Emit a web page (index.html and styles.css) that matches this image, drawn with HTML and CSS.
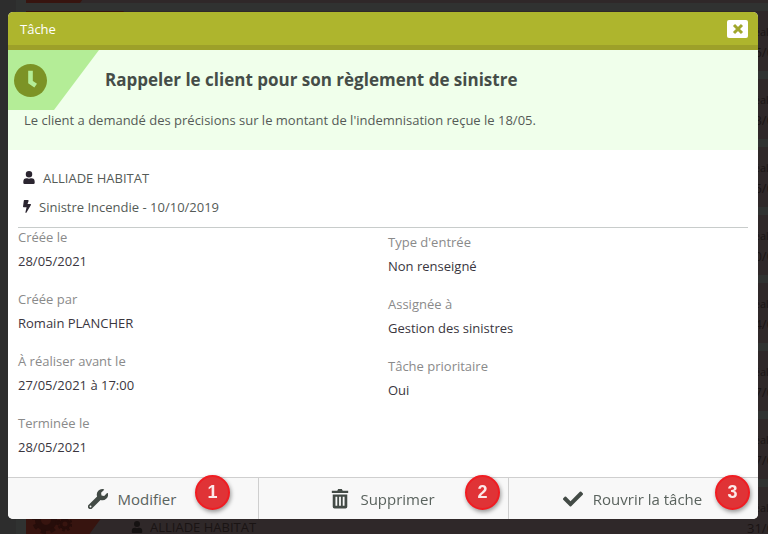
FILE: index.html
```
<!DOCTYPE html>
<html lang="fr">
<head>
    <meta charset="UTF-8">
    <meta name="viewport" content="width=device-width, initial-scale=1.0">
    <title>Tâche</title>
    <link rel="stylesheet" href="styles.css">
</head>
<body>

    <!-- Task list, dimmed behind the dialog -->
    <div class="backdrop" aria-hidden="true">
        <div class="row"><span class="row-tab"></span></div>
        <div class="row"><span class="row-tab"></span><p class="row-date">Réali<span>15/0</span></p></div>
        <div class="row"><span class="row-tab"></span><p class="row-date">Réali<span>13/0</span></p></div>
        <div class="row"><span class="row-tab"></span><p class="row-date">Réali<span>15/0</span></p></div>
        <div class="row"><span class="row-tab"></span><p class="row-date">Réali<span>10/0</span></p></div>
        <div class="row"><span class="row-tab"></span><p class="row-date">Réali<span>14/0</span></p></div>
        <div class="row"><span class="row-tab"></span><p class="row-date">Réali<span>17/0</span></p></div>
        <div class="row"><span class="row-tab"></span><p class="row-date">Réali<span>17/0</span></p></div>
        <div class="row">
            <span class="row-tab">
                <svg class="gears" viewBox="0 0 40 30">
                    <circle cx="14" cy="13" r="8" stroke-width="6" />
                    <circle cx="14" cy="13" r="12" stroke-width="4" stroke-dasharray="5 4.4" />
                    <circle cx="33" cy="17" r="4" stroke-width="3" />
                    <circle cx="33" cy="17" r="6" stroke-width="3" stroke-dasharray="2.4 2.3" />
                </svg>
            </span>
            <p class="row-name">
                <svg class="icon-small" viewBox="0 0 448 512"><path d="M224 256a128 128 0 1 0 0-256 128 128 0 0 0 0 256zm90 32h-17a174 174 0 0 1-146 0h-17A134 134 0 0 0 0 422v42a48 48 0 0 0 48 48h352a48 48 0 0 0 48-48v-42a134 134 0 0 0-134-134z" /></svg>
                ALLIADE HABITAT
            </p>
            <p class="row-date">Réali<span>31/0</span></p>
        </div>
    </div>

    <!-- Task dialog -->
    <main class="dialog" role="dialog" aria-labelledby="dialogTitle">
        <header class="dialog-header">
            <span id="dialogTitle">Tâche</span>
            <button class="close" type="button" aria-label="Fermer">
                <svg viewBox="0 0 12 12"><path d="M2 2l8 8M10 2l-8 8" /></svg>
            </button>
        </header>

        <section class="summary">
            <div class="summary-top">
                <div class="summary-tab">
                    <svg viewBox="0 0 32 32">
                        <circle cx="16" cy="16" r="16" fill="#7c9326" />
                        <path d="M16 6.5v11l5 3.5" fill="none" stroke="#b4ed97" stroke-width="4.5" />
                    </svg>
                </div>
                <h1>Rappeler le client pour son règlement de sinistre</h1>
            </div>
            <p>Le client a demandé des précisions sur le montant de l'indemnisation reçue le 18/05.</p>
        </section>

        <section class="content">
            <ul class="links">
                <li>
                    <svg class="icon-user" viewBox="0 0 448 512"><path d="M224 256a128 128 0 1 0 0-256 128 128 0 0 0 0 256zm90 32h-17a174 174 0 0 1-146 0h-17A134 134 0 0 0 0 422v42a48 48 0 0 0 48 48h352a48 48 0 0 0 48-48v-42a134 134 0 0 0-134-134z" /></svg>
                    ALLIADE HABITAT
                </li>
                <li>
                    <svg class="icon-bolt" viewBox="0 0 320 512"><path d="M296 160H181l42-129C227 15 215 0 200 0H56C44 0 34 9 32 21L0 261c-2 14 9 27 24 27h119L97 483c-4 15 8 29 23 29 8 0 16-4 21-12l176-304c9-16-2-36-21-36z" /></svg>
                    Sinistre Incendie - 10/10/2019
                </li>
            </ul>

            <div class="details">
                <dl>
                    <div><dt>Créée le</dt><dd>28/05/2021</dd></div>
                    <div><dt>Créée par</dt><dd>Romain PLANCHER</dd></div>
                    <div><dt>À réaliser avant le</dt><dd>27/05/2021 à 17:00</dd></div>
                    <div><dt>Terminée le</dt><dd>28/05/2021</dd></div>
                </dl>
                <dl class="right">
                    <div><dt>Type d'entrée</dt><dd>Non renseigné</dd></div>
                    <div><dt>Assignée à</dt><dd>Gestion des sinistres</dd></div>
                    <div><dt>Tâche prioritaire</dt><dd>Oui</dd></div>
                </dl>
            </div>
        </section>

        <footer class="actions">
            <div class="action">
                <button type="button">
                    <svg viewBox="0 0 512 512"><path d="M508 109c-2-9-13-12-20-5l-74 74-68-11-11-68 74-74c7-7 4-18-5-20A144 144 0 0 0 233 191L19 405a63 63 0 1 0 89 89l213-213A144 144 0 0 0 508 109zM64 472a24 24 0 1 1 0-48 24 24 0 0 1 0 48z" /></svg>
                    Modifier
                </button>
                <span class="badge badge-inner">1</span>
            </div>
            <div class="action">
                <button type="button">
                    <svg viewBox="0 0 20 22"><path fill-rule="evenodd" d="M1 2h6l1-2h4l1 2h6v2.500H1zM2 6h16v13.500q0 2-2 2H4q-2 0-2-2zM5 8.500v10h2v-10zM9 8.500v10h2v-10zM13 8.500v10h2v-10z" /></svg>
                    Supprimer
                </button>
                <span class="badge">2</span>
            </div>
            <div class="action">
                <button type="button">
                    <svg viewBox="0 0 512 512"><path d="M174 439L7 273a26 26 0 0 1 0-36l37-37a26 26 0 0 1 36 0l112 113L432 73a26 26 0 0 1 36 0l37 37a26 26 0 0 1 0 36L210 439a26 26 0 0 1-36 0z" /></svg>
                    Rouvrir la tâche
                </button>
                <span class="badge">3</span>
            </div>
        </footer>
    </main>

</body>
</html>
```
FILE: styles.css
```
* {
    box-sizing: border-box;
}
body {
    margin: 0;
    padding: 12px 10px 15px 8px;
    font-family: "Open Sans", Arial, sans-serif;
    font-size: 13px;
    line-height: 20px;
    color: #555b57;
    background-color: #2d2d2d;
}
h1, p, ul, dl, dd {
    margin: 0;
    padding: 0;
}

/* List behind the dialog */
.backdrop {
    position: fixed;
    inset: 0;
    display: flex;
    flex-direction: column;
    justify-content: flex-end;
    gap: 8px;
    margin-bottom: -13px;
    padding-left: 10px;
    overflow: hidden;
    background-color: #303231;
    border-left: 16px solid #2d2d2d;
    color: #1a1414;
}
.row {
    display: flex;
    flex: none;
    height: 60px;
    background-color: #2f2829;
}
.row-tab {
    width: 98px;
    padding: 20px 0 0 6px;
    background-color: #37140f;
    clip-path: polygon(0 0, 100% 0, 54px 100%, 0 100%);
}
.gears {
    width: 40px;
    height: 30px;
    fill: none;
    stroke: #260d0a;
}
.row-name {
    display: flex;
    align-items: center;
    gap: 7px;
    padding: 19px 0 0 7px;
}
.icon-small {
    width: 12px;
    height: 12px;
    fill: #151212;
}
.row-date {
    width: 21px;
    margin-left: auto;
    padding-top: 11px;
    font-size: 11px;
    direction: ltr;
}
.row-date span {
    display: block;
    font-size: 13px;
}

/* Dialog */
.dialog {
    position: relative;
    background-color: #fff;
    border-radius: 5px;
}
.dialog-header {
    display: flex;
    justify-content: space-between;
    align-items: center;
    height: 38px;
    padding: 0 10px 0 12px;
    background-color: #aeb52d;
    border-bottom: 5px solid #9da029;
    border-radius: 5px 5px 0 0;
    color: #fff;
}
.close {
    display: flex;
    align-items: center;
    justify-content: center;
    width: 21px;
    height: 18px;
    padding: 0;
    background-color: #fff;
    border: none;
    border-radius: 2px;
    cursor: pointer;
}
.close svg {
    width: 12px;
    height: 12px;
    fill: none;
    stroke: #a1a72c;
    stroke-width: 3;
}
.summary {
    height: 100px;
    background-color: #f0ffeb;
}
.summary-top {
    display: flex;
    align-items: center;
}
.summary-tab {
    width: 91px;
    height: 60px;
    padding: 14px 6px;
    background-color: #b4ed97;
    clip-path: polygon(0 0, 100% 0, 46px 100%, 0 100%);
}
.summary-tab svg {
    width: 33px;
    height: 33px;
}
.summary h1 {
    margin-left: 6px;
    font-size: 17px;
    line-height: 24px;
    color: #454d48;
}
.summary p {
    padding-left: 16px;
}

/* Task details */
.content {
    padding: 13px 10px 18px;
}
.links {
    list-style: none;
    padding: 0 5px 6px;
    border-bottom: 1px solid #c8cccb;
}
.links li {
    display: flex;
    align-items: center;
    gap: 8px;
    height: 29px;
}
.links svg {
    height: 13px;
    fill: #2b2530;
}
.icon-user {
    width: 12px;
}
.icon-bolt {
    width: 8px;
}
.details {
    display: grid;
    grid-template-columns: 370px 1fr;
    line-height: 18px;
}
.details .right {
    padding-top: 5px;
}
.details dl > div {
    height: 62px;
}
.details dl > div:last-child {
    height: 45px;
}
.details dt {
    color: #8a8a8a;
}
.details dd {
    margin-top: 6px;
    color: #3a363e;
}

/* Footer */
.actions {
    display: grid;
    grid-template-columns: repeat(3, 1fr);
    height: 42px;
    background-color: #f8f8f8;
    border-top: 1px solid #cfcfcf;
    border-radius: 0 0 5px 5px;
}
.action {
    position: relative;
}
.action + .action {
    border-left: 1px solid #cfcfcf;
}
.action button {
    display: flex;
    align-items: center;
    justify-content: center;
    gap: 10px;
    width: 100%;
    height: 100%;
    padding: 0 2px 0 0;
    background: none;
    border: none;
    font-family: inherit;
    font-size: 15px;
    color: #5a635e;
    cursor: pointer;
}
.action svg {
    width: 20px;
    height: 20px;
    fill: #434b46;
}
.badge {
    position: absolute;
    top: -3px;
    right: 8px;
    width: 35px;
    height: 35px;
    border: 2px solid #f01c22;
    border-radius: 50%;
    background-color: #e03336;
    box-shadow: 1px 2px 4px rgba(0, 0, 0, 0.4);
    color: #fbe9e9;
    font: bold 18px/31px "Liberation Sans", Arial, sans-serif;
    text-align: center;
}
.badge-inner {
    right: 28px;
}
```
